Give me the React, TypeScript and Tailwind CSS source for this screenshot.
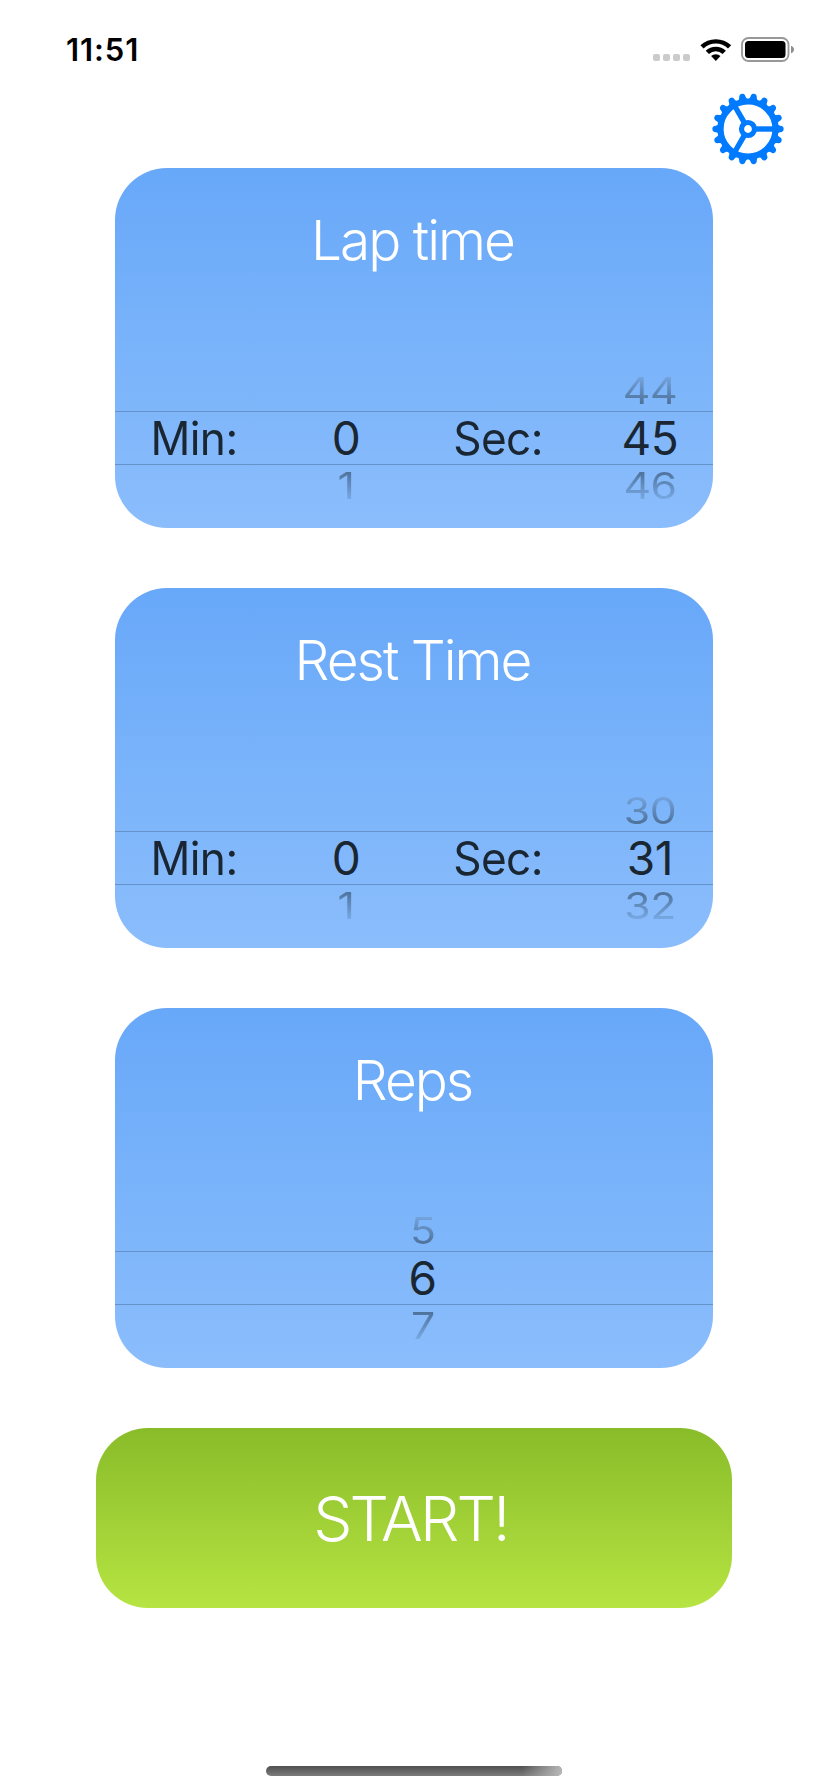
import React from "react";

type Column = { before?: string; value: string; after?: string; label?: boolean };

function GearIcon() {
  const teeth = Array.from({ length: 18 }, (_, i) => i * 20);
  return (
    <svg viewBox="-36 -36 72 72" className="h-[72px] w-[72px]" fill="#007aff" stroke="#007aff">
      {teeth.map((a) => (
        <path
          key={a}
          d="M29 -5 Q30.8 -3.6 32 -3.3 L33.8 -2.9 Q35.7 -2.3 35.7 0 Q35.7 2.3 33.8 2.9 L32 3.3 Q30.8 3.6 29 5 Z"
          stroke="none"
          transform={`rotate(${a})`}
        />
      ))}
      <circle r="27.5" fill="none" strokeWidth="6.2" />
      {[0, 120, 240].map((a) => (
        <path key={a} d="M7 0H26" strokeWidth="5.4" fill="none" transform={`rotate(${a})`} />
      ))}
      <circle r="6.5" fill="none" strokeWidth="5.2" />
    </svg>
  );
}

function StatusBar() {
  return (
    <div className="flex h-[84px] items-start justify-between pr-[34px] pl-[66px]">
      <span className="h-[98px] text-[31px] leading-[99px] font-semibold tracking-[0.9px] text-black">11:51</span>
      <div className="flex items-end pt-[37px]">
        <div className="flex gap-[3px] pb-[1px]">
          {[0, 1, 2, 3].map((i) => (
            <span key={i} className="h-[7px] w-[7px] rounded-[2px] bg-[#cbcbcb]" />
          ))}
        </div>
        <svg viewBox="0 0 32 24" className="ml-[10px] h-[24px] w-[32px]" fill="#000">
          <path d="M0.4 7.3 A22.3 22.3 0 0 1 31.2 7.3 L28 10.5 A17.6 17.6 0 0 0 3.6 10.5 Z" />
          <path d="M5.7 12.7 A14.6 14.6 0 0 1 25.9 12.7 L22.6 15.9 A9.9 9.9 0 0 0 9 15.9 Z" />
          <path d="M11.1 18.1 A7 7 0 0 1 20.5 18.1 L15.8 23 Z" />
        </svg>
        <svg viewBox="0 0 53 25" className="ml-[9px] h-[25px] w-[53px]">
          <rect x="1" y="1" width="46.5" height="23" rx="6.5" fill="none" stroke="#989898" strokeWidth="1.8" />
          <rect x="4" y="4" width="40.5" height="17" rx="3.5" fill="#000" />
          <path d="M50 8.7 C52 9.4 53 10.8 53 12.5 C53 14.2 52 15.6 50 16.3 Z" fill="#8f8f8f" />
        </svg>
      </div>
    </div>
  );
}

function PickerCard({ title, columns, gridClass }: {
  title: string;
  columns: Column[];
  gridClass: string;
}) {
  return (
    <section className="h-[360px] w-[598px] overflow-hidden rounded-[52px] bg-linear-to-b from-[#68a8f9] via-[#79b3fa] to-[#8bbdfc]">
      <h2 className="h-[202px] pr-[3px] text-center text-[55px] leading-[144px] font-light tracking-[-2px] text-white">{title}</h2>
      <div className={`grid h-[41px] ${gridClass}`}>
        {columns.map((c, i) => (
          <div key={i} className="h-10 scale-x-[0.93] scale-y-[0.8] bg-linear-to-b from-[#76a6e2] from-5% to-[#50739c] to-90% bg-clip-text text-center text-[46px] leading-10 tracking-[-0.5px] text-transparent">
            {c.before}
          </div>
        ))}
      </div>
      <div className={`grid h-[54px] border-y border-[#6592c9] ${gridClass}`}>
        {columns.map((c, i) => (
          <div
            key={i}
            className={`text-center text-[46px] leading-[52px] text-[#1a2733] ${c.label ? "scale-x-[0.96] tracking-[-0.6px]" : "tracking-[-0.4px]"}`}
          >
            {c.value}
          </div>
        ))}
      </div>
      <div className={`grid h-[41px] ${gridClass}`}>
        {columns.map((c, i) => (
          <div key={i} className="scale-x-[0.93] scale-y-[0.8] bg-linear-to-b from-[#50739c] from-10% to-[#7aabe8] to-95% bg-clip-text text-center text-[46px] leading-[41px] tracking-[-0.5px] text-transparent">
            {c.after}
          </div>
        ))}
      </div>
    </section>
  );
}

const fourColumns = "grid-cols-[152px_152px_152px_152px] pl-[3px]";

export default function App() {
  return (
    <main className="flex h-[1792px] w-[828px] flex-col overflow-hidden bg-white font-['Inter',sans-serif]">
      <StatusBar />
      <div className="flex h-[84px] justify-end pt-[8.5px] pr-[44px]">
        <button aria-label="Settings" className="h-[72px] w-[72px]">
          <GearIcon />
        </button>
      </div>
      <div className="flex flex-col gap-[60px] pl-[115px]">
        <PickerCard
          title="Lap time"
          gridClass={fourColumns}
          columns={[
            { value: "Min:", label: true },
            { value: "0", after: "1" },
            { value: "Sec:", label: true },
            { before: "44", value: "45", after: "46" },
          ]}
        />
        <PickerCard
          title="Rest Time"
          gridClass={fourColumns}
          columns={[
            { value: "Min:", label: true },
            { value: "0", after: "1" },
            { value: "Sec:", label: true },
            { before: "30", value: "31", after: "32" },
          ]}
        />
        <PickerCard
          title="Reps"
          gridClass="grid-cols-1 justify-items-center pl-[17px]"
          columns={[{ before: "5", value: "6", after: "7" }]}
        />
      </div>
      <button className="mt-[60px] ml-24 h-[180px] w-[636px] rounded-[52px] bg-linear-to-b from-[#89bc29] to-[#b6e442] pr-[7px] text-center text-[62px] leading-[181px] font-light tracking-[-2.8px] text-white">
        START!
      </button>
      <div className="mt-[158px] ml-[266px] h-[10px] w-[296px] overflow-hidden rounded-full bg-linear-to-b from-[#505050] to-[#7c7c7c]">
        <div className="ml-auto h-full w-[40px] bg-linear-to-r from-[#b8b8b8]/0 to-[#b8b8b8]" />
      </div>
    </main>
  );
}
